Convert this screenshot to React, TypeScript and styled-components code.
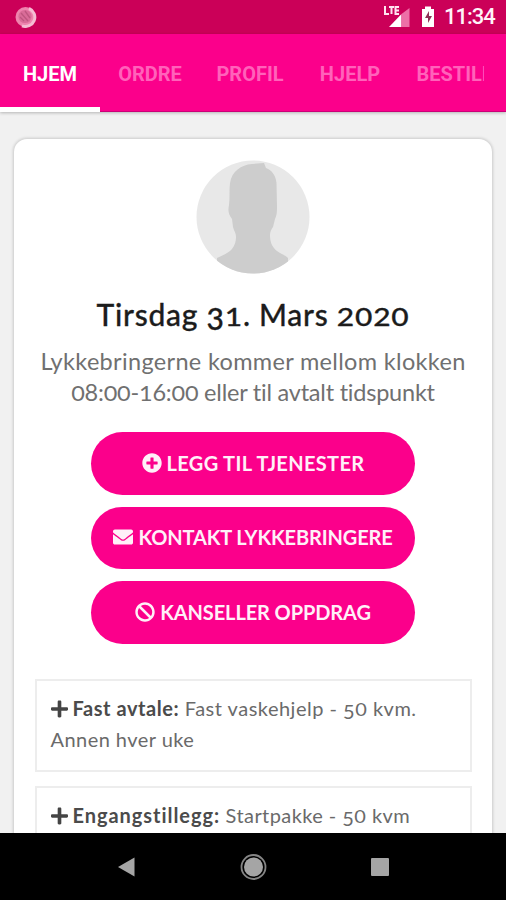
import React from "react";
import styled, { createGlobalStyle } from "styled-components";
import { FaPlusCircle, FaEnvelope, FaBan, FaPlus } from "react-icons/fa";

const GlobalStyle = createGlobalStyle`
  * { box-sizing: border-box; }
  body { margin: 0; background: #f1f1f1; }
`;

const Screen = styled.div`
  width: 506px;
  height: 900px;
  display: flex;
  flex-direction: column;
  overflow: hidden;
  background: #f1f1f1;
  font-family: Lato, "Liberation Sans", sans-serif;
`;

const StatusBar = styled.header`
  flex: none;
  height: 34px;
  padding: 0 12px 0 15px;
  display: flex;
  align-items: center;
  justify-content: space-between;
  background: #cb0058;
`;

const StatusIcons = styled.div`
  display: flex;
  align-items: center;
`;

const Clock = styled.span`
  width: 50px;
  margin-left: 9px;
  font: 500 22px/34px Roboto, sans-serif;
  letter-spacing: -1px;
  color: #fff3f8;
  white-space: nowrap;
`;

const Tabs = styled.nav`
  flex: none;
  height: 78px;
  display: flex;
  background: #fb008b;
  border-bottom: 1px solid #cc0078;
  box-shadow: 0 1px 3px rgba(0, 0, 0, 0.25);
`;

const Tab = styled.a<{ $active?: boolean }>`
  flex: none;
  width: 100px;
  height: 78px;
  display: flex;
  justify-content: center;
  align-items: center;
  padding-top: 7px;
  font: 700 20px/24px Roboto, sans-serif;
  color: ${(p) => (p.$active ? "#fff" : "#ff62ba")};
  border-bottom: 5px solid ${(p) => (p.$active ? "#fff" : "transparent")};
`;

const TabLabel = styled.span<{ $clip?: boolean }>`
  width: ${(p) => (p.$clip ? "67px" : "auto")};
  overflow: hidden;
  white-space: nowrap;
`;

const Content = styled.main`
  flex: 1;
  min-height: 0;
  overflow: hidden;
  padding: 27px 14px 0;
`;

const Card = styled.section`
  height: 760px;
  display: flex;
  flex-direction: column;
  align-items: center;
  padding-top: 21px;
  background: #fff;
  border-radius: 13px;
  box-shadow: 0 0 3px 1px rgba(0, 0, 0, 0.16);
`;

const Avatar = styled.svg`
  flex: none;
  width: 114px;
  height: 114px;
`;

const Title = styled.h1`
  margin: 20px 0 0;
  font-size: 30px;
  line-height: 40px;
  font-weight: 500;
  -webkit-text-stroke: 0.3px #1c1c1c;
  letter-spacing: 0.75px;
  color: #1c1c1c;
  white-space: nowrap;
`;

const Intro = styled.p`
  margin: 12px 0 0;
  font-size: 23.5px;
  line-height: 30.5px;
  text-align: center;
  color: #707070;
`;

const Line = styled.span<{ $spacing: number }>`
  display: block;
  white-space: nowrap;
  letter-spacing: ${(p) => p.$spacing}px;
`;

/* Text figures: short ones sit near x-height, descending ones hang below the baseline. */
const ShortFigure = styled.span`
  display: inline-block;
  line-height: 1;
  transform: scaleY(0.86);
  transform-origin: 50% 88%;
`;

const LowFigure = styled.span`
  display: inline-block;
  line-height: 1;
  transform: translateY(0.13em);
`;

const Actions = styled.div`
  margin-top: 25px;
  display: flex;
  flex-direction: column;
  gap: 12px;
`;

const ActionButton = styled.button<{ $spacing: number }>`
  width: 324px;
  height: 62.5px;
  padding: 0 0 1px;
  border: 0;
  border-radius: 32px;
  display: flex;
  align-items: center;
  justify-content: center;
  gap: 5px;
  background: #fb008b;
  color: #fff0f8;
  font: 700 20px/24px Lato, sans-serif;
  letter-spacing: ${(p) => p.$spacing}px;
  white-space: nowrap;
  svg { flex: none; }
`;

const Services = styled.div`
  width: 437px;
  margin-top: 35.5px;
  display: flex;
  flex-direction: column;
  gap: 14px;
`;

const Service = styled.div`
  height: 93px;
  padding: 12px 14px;
  border: 2px solid #ededed;
  font-size: 20px;
  line-height: 31px;
  color: #6a6a6a;
  svg { width: 17px; height: 20px; margin-right: 5px; vertical-align: -3px; color: #444; }
`;

const Strong = styled.strong<{ $spacing: number }>`
  font-weight: 700;
  letter-spacing: ${(p) => p.$spacing}px;
  color: #4b4b4b;
`;

const NavBar = styled.footer`
  flex: none;
  height: 67px;
  background: #000;
  display: flex;
  align-items: center;
  justify-content: space-between;
  padding: 0 115px 0 116px;
`;

export default function App() {
  return (
    <Screen>
      <GlobalStyle />
      <StatusBar>
        <svg width="22" height="22" viewBox="0 0 22 22">
          <circle cx="10.5" cy="11" r="10" fill="#ee84ae" />
          <path d="M14 2.5a9 9 0 0 1-7 17.3" fill="none" stroke="#f5bdd3" strokeWidth="3" />
          <circle cx="10" cy="10.5" r="6.6" fill="#d96c98" />
          <path d="M6 7l7 8M10 5l5 7M5 11l4 4" stroke="#bd567f" strokeWidth="1.3" />
        </svg>
        <StatusIcons>
          <svg width="52" height="26" viewBox="0 0 52 26">
            <path d="M2 2v8h4M6 3h5M8.5 3v7M16 3h-3.500v7H16M12.500 6.500H16" fill="none" stroke="#ffe3ef" strokeWidth="2" />
            <path d="M6 23L18.500 10v13z" fill="#fff" />
            <path d="M18.500 10L26.500 4v19h-8z" fill="#ed70a7" />
            <path d="M42 2.500h6V5h3v18H39V5h3z" fill="#fff" />
            <path d="M46 7l-4 7h3v5l4-7h-3z" fill="#8e3156" />
          </svg>
          <Clock>11:34</Clock>
        </StatusIcons>
      </StatusBar>
      <Tabs>
        <Tab $active><TabLabel>HJEM</TabLabel></Tab>
        <Tab><TabLabel>ORDRE</TabLabel></Tab>
        <Tab><TabLabel>PROFIL</TabLabel></Tab>
        <Tab><TabLabel>HJELP</TabLabel></Tab>
        <Tab><TabLabel $clip>BESTILL</TabLabel></Tab>
      </Tabs>
      <Content>
        <Card>
          <Avatar viewBox="0 0 114 114">
            <defs>
              <clipPath id="disc"><circle cx="57" cy="57" r="56.500" /></clipPath>
            </defs>
            <circle cx="57" cy="57" r="56.500" fill="#e8e8e8" />
            <path
              clipPath="url(#disc)"
              fill="#cdcdcd"
              d="M34 23C36 11 45 5 56 4l12-1 2 5c6 2 10 8 10.500 15L81 46c0 5 0 9-2 13l-2 8c-2 3-3 5-3 8 0 7 2 12 7 16 4 3 8 4 11 7v16H21V98c6-3 12-5 15-9 3-4 4-8 4-12 0-4-2-6-3-10l-1-8c-4-5-4-9-3-14 1-7 0-15 1-22z"
            />
          </Avatar>
          <Title>
            Tirsdag <LowFigure>3</LowFigure><ShortFigure>1</ShortFigure>. Mars <ShortFigure>2020</ShortFigure>
          </Title>
          <Intro>
            <Line $spacing={0.33}>Lykkebringerne kommer mellom klokken </Line>
            <Line $spacing={-0.22}>
              <ShortFigure>0</ShortFigure>8:<ShortFigure>00</ShortFigure>-<ShortFigure>1</ShortFigure>6:<ShortFigure>00</ShortFigure> eller til avtalt tidspunkt
            </Line>
          </Intro>
          <Actions>
            <ActionButton $spacing={0.33}><FaPlusCircle />LEGG TIL TJENESTER</ActionButton>
            <ActionButton $spacing={-0.14}><FaEnvelope />KONTAKT LYKKEBRINGERE</ActionButton>
            <ActionButton $spacing={-0.1}><FaBan />KANSELLER OPPDRAG</ActionButton>
          </Actions>
          <Services>
            <Service>
              <Line $spacing={0.5}>
                <FaPlus /><Strong $spacing={0.55}>Fast avtale:</Strong> Fast vaskehjelp - <LowFigure>5</LowFigure><ShortFigure>0</ShortFigure> kvm.{" "}
              </Line>
              <Line $spacing={0.45}>Annen hver uke</Line>
            </Service>
            <Service>
              <Line $spacing={0.43}>
                <FaPlus /><Strong $spacing={0.95}>Engangstillegg:</Strong> Startpakke - <LowFigure>5</LowFigure><ShortFigure>0</ShortFigure> kvm
              </Line>
            </Service>
          </Services>
        </Card>
      </Content>
      <NavBar>
        <svg width="22" height="26" viewBox="0 0 22 26"><path d="M2 13L18.500 3.500v19z" fill="#a5a5a5" /></svg>
        <svg width="28" height="28" viewBox="0 0 28 28">
          <circle cx="13.500" cy="14" r="12" fill="none" stroke="#858585" strokeWidth="1.800" />
          <circle cx="13.500" cy="14" r="9.500" fill="#a5a5a5" />
        </svg>
        <svg width="22" height="26" viewBox="0 0 22 26"><rect x="2" y="4" width="18" height="18" rx="1" fill="#a5a5a5" /></svg>
      </NavBar>
    </Screen>
  );
}
